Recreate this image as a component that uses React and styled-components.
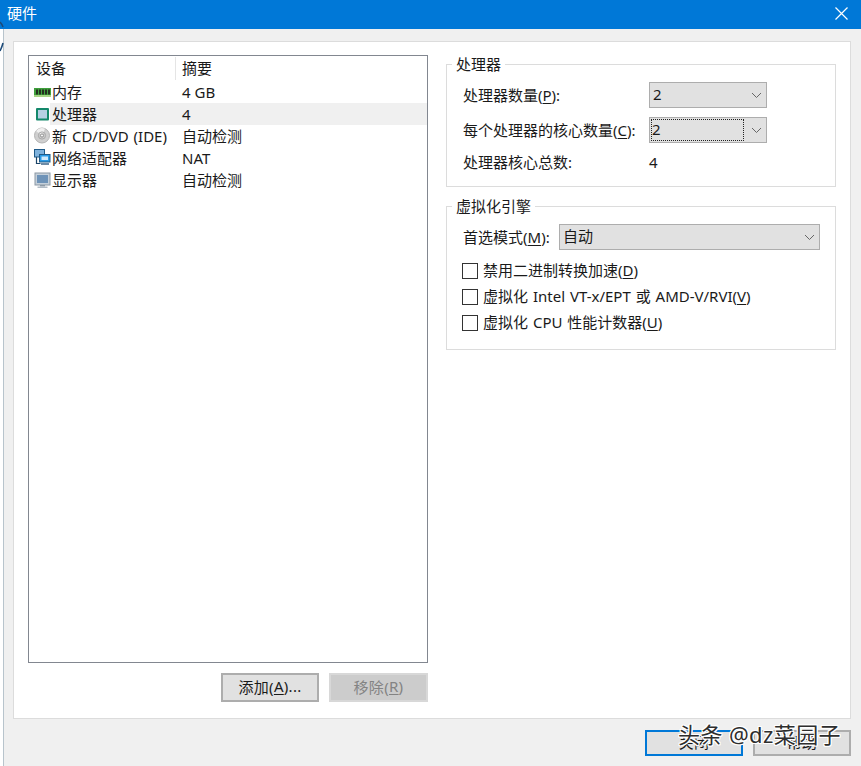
import React from "react";
import styled, { createGlobalStyle } from "styled-components";

const Global = createGlobalStyle`
  html, body { margin: 0; padding: 0; background: #fff; }
  * { box-sizing: border-box; }
  body { font-family: "Noto Sans", "Noto Sans CJK SC", sans-serif; font-size: 15px; color: #1a1a1a; }
`;
const Screen = styled.div`
  position: relative; width: 861px; height: 766px; overflow: hidden;
  display: flex; flex-direction: column;
`;
const TitleBar = styled.div`
  height: 29px; flex: none; background: #0078d7; color: #fff;
  display: flex; align-items: center; justify-content: space-between;
  padding: 0 13px 2px 7px; font-size: 15px; line-height: 27px;
`;
const Main = styled.div`flex: 1; display: flex; min-height: 0;`;
const LeftEdge = styled.div`width: 4px; flex: none; background: #fff; border-right: 1px solid #b8c4cc;`;
const EdgeArc = styled.svg`position: absolute; left: 0; top: 18px; display: block;`;
const Dialog = styled.div`
  flex: 1; background: #f0f0f0; margin-right: 1px;
  display: flex; flex-direction: column; padding: 12px 10px 10px 9px;
`;
const Panel = styled.div`
  height: 678px; flex: none; background: #fff; border: 1px solid #dcdcdc;
  padding: 13px 14px 16px 14px; display: flex; gap: 18px;
`;
const LeftCol = styled.div`width: 400px; flex: none; display: flex; flex-direction: column; gap: 10px;`;
const List = styled.div`flex: 1; border: 1px solid #828790; background: #fff; display: flex; flex-direction: column; padding-top: 1px; overflow: hidden;`;
const Row = styled.div`
  height: 22px; flex: none; display: grid; grid-template-columns: 153px 1fr; align-items: center; line-height: 22px;
  white-space: nowrap;
`;
const HeaderRow = styled(Row)`height: 23px; margin-bottom: 1px; line-height: 23px;`;
const HeadCell = styled.div`
  padding-left: ${p => p.$second ? "6px" : "7px"}; height: 23px;
  border-left: ${p => p.$second ? "1px solid #e5e5e5" : "none"};
  margin-left: ${p => p.$second ? "-7px" : "0"};
`;
const NameCell = styled.div`display: flex; align-items: center; height: 22px; padding-left: 4px;`;
const NameText = styled.span`
  flex: 1; height: 22px; margin-right: -250px;
  background: ${p => p.$sel ? "#f0f0f0" : "transparent"};
  padding-left: 2px; line-height: 23px; word-spacing: 1px;
`;
const IconBox = styled.span`width: 17px; height: 18px; flex: none; display: block; position: relative; z-index: 1;`;
const ValueCell = styled.div`position: relative; z-index: 1; line-height: 23px; height: 22px;`;
const ListButtons = styled.div`display: flex; justify-content: flex-end; gap: 10px; height: 29px; flex: none;`;
const Btn = styled.div`
  width: ${p => p.$w}; height: ${p => p.$h || "29px"}; flex: none;
  display: flex; align-items: center; justify-content: center; padding-bottom: 3px; letter-spacing: 0.3px;
  background: ${p => p.$off ? "#cccccc" : "#e1e1e1"};
  border: ${p => p.$focus ? "2px solid #0078d7" : p.$off ? "2px solid #d8d8d8" : "2px solid #adadad"};
  color: ${p => p.$off ? "#838383" : "#1a1a1a"};
`;
const RightCol = styled.div`width: 390px; flex: none; display: flex; flex-direction: column; gap: 19px; padding-top: 9px;`;
const Group = styled.div`
  position: relative; border: 1px solid #dcdcdc; height: ${p => p.$h}; padding-top: 17px; display: flex; flex-direction: column;
`;
const Legend = styled.div`
  position: absolute; left: 5px; top: -11px; background: #fff; padding: 0 4px; height: 20px; line-height: 20px;
`;
const FormRow = styled.div`
  display: flex; align-items: center; height: 26px; margin-bottom: ${p => p.$mb}; white-space: nowrap; padding-left: 16px; line-height: 24px;
`;
const Label = styled.div`width: ${p => p.$w || "186px"}; flex: none; height: 24px;`;
const Plain = styled.span`height: 24px;`;
const Select = styled.div`
  width: ${p => p.$w}; height: 26px; flex: none; background: #e1e1e1; border: 1px solid #adadad;
  display: flex; align-items: center; justify-content: space-between; padding: 0 4px 0 3px;
`;
const SelVal = styled.span`
  width: ${p => p.$focus ? "91px" : "auto"}; height: 20px; line-height: 19px;
  outline: ${p => p.$focus ? "1px dotted #222" : "none"};
  margin-left: ${p => p.$focus ? "-1px" : "0"};
`;
const U = styled.span`text-decoration: underline; text-underline-offset: 2px;`;
const ChecksBlock = styled.div`display: flex; flex-direction: column; margin-top: 8px;`;
const CheckRow = styled.div`display: flex; align-items: center; height: 26px; padding-left: 15px; gap: 5px; white-space: nowrap;`;
const CheckText = styled.span`height: 24px; line-height: 22px; word-spacing: 1px;`;
const CheckBox = styled.span`width: 16px; height: 16px; flex: none; background: #fff; border: 1px solid #333;`;
const Footer = styled.div`display: flex; justify-content: flex-end; gap: 10px; margin-top: 11px;`;
const Watermark = styled.div`
  position: absolute; left: 678px; top: 718px; font-size: 22px; line-height: 32px; color: #2e2e2e; white-space: nowrap; letter-spacing: 0.4px;
  text-shadow: 1px 0 0 #fff, -1px 0 0 #fff, 0 1px 0 #fff, 0 -1px 0 #fff, 1px 1px 0 #fff, -1px -1px 0 #fff, 1px -1px 0 #fff, -1px 1px 0 #fff;
`;

const Chevron = () => (
  <svg width="11" height="7" viewBox="0 0 11 7"><path d="M1 1 L5.5 5.5 L10 1" fill="none" stroke="#666" strokeWidth="1" /></svg>
);
const Close = () => (
  <svg width="13" height="13" viewBox="0 0 13 13"><path d="M.5.5 12.5 12.5M12.5.5.5 12.5" stroke="#fff" strokeWidth="1.2" /></svg>
);
const RamIcon = () => (
  <svg width="18" height="18" viewBox="0 0 18 18">
    <rect x="1" y="5" width="17" height="9" fill="#3fa03c" />
    <rect x="1" y="12" width="17" height="2" fill="#a5d484" />
    <path d="M3 6.5h2v5H3zM6 6.5h2v5H6zM9 6.5h2v5H9zM12 6.5h2v5h-2zM15 6.5h2v5h-2z" fill="#24301f" />
  </svg>
);
const CpuIcon = () => (
  <svg width="18" height="18" viewBox="0 0 18 18">
    <rect x="3" y="3" width="13" height="12.5" rx="1" fill="#14886b" />
    <rect x="5" y="5" width="9" height="8.5" fill="#b6d0e4" />
  </svg>
);
const DiscIcon = () => (
  <svg width="18" height="18" viewBox="0 0 18 18">
    <circle cx="9" cy="8.5" r="7.5" fill="#cfcfcf" stroke="#b4b4b4" />
    <path d="M9 8.5 3 4A7.5 7.5 0 0 1 12 1.7Z" fill="#f0f0f0" />
    <circle cx="9" cy="8.5" r="3.6" fill="none" stroke="#a8a8a8" />
    <circle cx="9" cy="8.5" r="1.6" fill="#f6f6f6" stroke="#8e8e8e" />
  </svg>
);
const NetIcon = () => (
  <svg width="18" height="18" viewBox="0 0 18 18">
    <rect x="1.5" y="0.5" width="10" height="7.5" fill="#7fb2dc" stroke="#1f5a88" />
    <path d="M3.5 8v6.5h4" fill="none" stroke="#1c4468" strokeWidth="1.2" />
    <rect x="6.5" y="5.5" width="10.5" height="7.5" fill="#2b9be6" stroke="#1f5a88" />
    <rect x="8.5" y="7.5" width="6.5" height="3.5" fill="#cfe9fb" />
    <rect x="8" y="14" width="8" height="2" fill="#6d8ba6" />
  </svg>
);
const MonitorIcon = () => (
  <svg width="18" height="18" viewBox="0 0 18 18">
    <rect x="2" y="2" width="15" height="12" fill="#c5d0da" stroke="#8b98a4" strokeWidth="1" />
    <rect x="4" y="4" width="11" height="8" fill="#6e93b8" />
    <rect x="7" y="14" width="5" height="1.5" fill="#8d9aa6" />
    <rect x="4.5" y="15.5" width="10" height="1.5" fill="#b2bcc6" />
  </svg>
);

const devices = [
  { name: "内存", value: "4 GB", Icon: RamIcon },
  { name: "处理器", value: "4", Icon: CpuIcon, sel: true },
  { name: "新 CD/DVD (IDE)", value: "自动检测", Icon: DiscIcon },
  { name: "网络适配器", value: "NAT", Icon: NetIcon },
  { name: "显示器", value: "自动检测", Icon: MonitorIcon },
];

export default function App() {
  return (
    <Screen>
      <Global />
      <TitleBar><span>硬件</span><Close /></TitleBar>
      <Main>
        <LeftEdge />
        <Dialog>
          <Panel>
            <LeftCol>
              <List>
                <HeaderRow>
                  <HeadCell>设备</HeadCell>
                  <HeadCell $second>摘要</HeadCell>
                </HeaderRow>
                {devices.map(d => (
                  <Row key={d.name}>
                    <NameCell>
                      <IconBox><d.Icon /></IconBox>
                      <NameText $sel={d.sel}>{d.name}</NameText>
                    </NameCell>
                    <ValueCell>{d.value}</ValueCell>
                  </Row>
                ))}
              </List>
              <ListButtons>
                <Btn $w="98px">添加(<U>A</U>)...</Btn>
                <Btn $w="99px" $off>移除(<U>R</U>)</Btn>
              </ListButtons>
            </LeftCol>
            <RightCol>
              <Group $h="123px">
                <Legend>处理器</Legend>
                <FormRow $mb="9px">
                  <Label>处理器数量(<U>P</U>):</Label>
                  <Select $w="118px"><SelVal>2</SelVal><Chevron /></Select>
                </FormRow>
                <FormRow $mb="6px">
                  <Label>每个处理器的核心数量(<U>C</U>):</Label>
                  <Select $w="118px"><SelVal $focus>2</SelVal><Chevron /></Select>
                </FormRow>
                <FormRow $mb="0">
                  <Label>处理器核心总数:</Label>
                  <Plain>4</Plain>
                </FormRow>
              </Group>
              <Group $h="144px">
                <Legend>虚拟化引擎</Legend>
                <FormRow $mb="0">
                  <Label $w="96px">首选模式(<U>M</U>):</Label>
                  <Select $w="261px"><SelVal>自动</SelVal><Chevron /></Select>
                </FormRow>
                <ChecksBlock>
                  <CheckRow><CheckBox /><CheckText>禁用二进制转换加速(<U>D</U>)</CheckText></CheckRow>
                  <CheckRow><CheckBox /><CheckText>虚拟化 Intel VT-x/EPT 或 AMD-V/RVI(<U>V</U>)</CheckText></CheckRow>
                  <CheckRow><CheckBox /><CheckText>虚拟化 CPU 性能计数器(<U>U</U>)</CheckText></CheckRow>
                </ChecksBlock>
              </Group>
            </RightCol>
          </Panel>
          <Footer>
            <Btn $focus $w="98px" $h="26px">关闭</Btn>
            <Btn $w="98px" $h="26px">帮助</Btn>
          </Footer>
        </Dialog>
      </Main>
      <EdgeArc width="4" height="36" viewBox="0 0 4 36">
        <path d="M0 4Q2 6 3 9M3 25Q2 29 0 33" fill="none" stroke="#1c4a78" strokeWidth="1.6" />
      </EdgeArc>
      <Watermark>头条 @dz菜园子</Watermark>
    </Screen>
  );
}
